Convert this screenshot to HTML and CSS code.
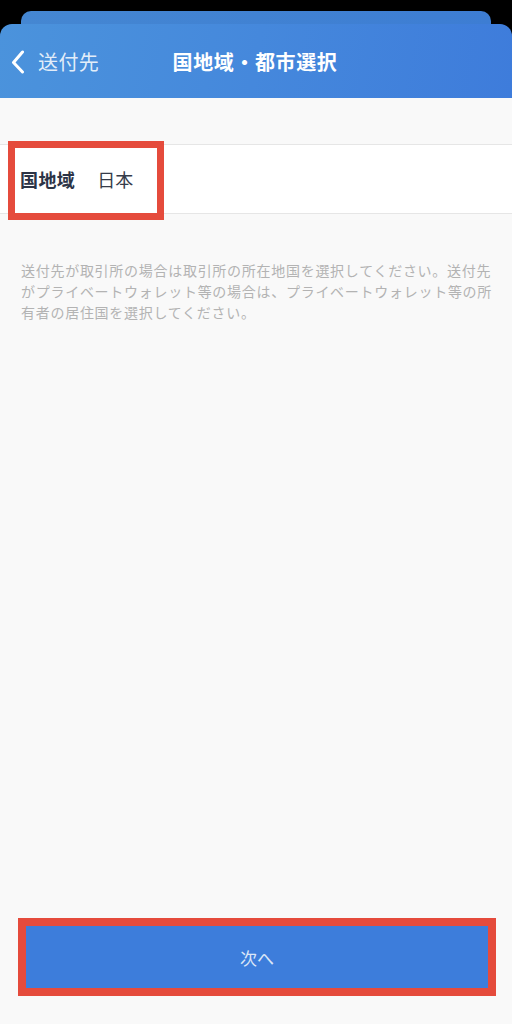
FILE: index.html
```html
<!DOCTYPE html>
<html lang="ja">
<head>
  <meta charset="utf-8">
  <title>国地域・都市選択</title>
  <link rel="stylesheet" href="styles.css">
</head>
<body>
  <div class="screen">
    <div class="top">
      <div class="sheet-back"></div>
      <header class="nav">
        <a class="nav-back" href="#">
          <svg class="chevron" width="14" height="24" viewBox="0 0 14 24">
            <path d="M11.5 2 L2.5 12.5 L11.5 22" fill="none" stroke="#fff" stroke-width="3" stroke-linecap="round" stroke-linejoin="round"/>
          </svg>
          <span>送付先</span>
        </a>
        <h1 class="nav-title">国地域・都市選択</h1>
      </header>
    </div>

    <main class="content">
      <div class="row">
        <span class="row-label">国地域</span>
        <span class="row-value">日本</span>
        <div class="mark mark-row"></div>
      </div>

      <p class="note">送付先が取引所の場合は取引所の所在地国を選択してください。送付先がプライベートウォレット等の場合は、プライベートウォレット等の所有者の居住国を選択してください。</p>

      <div class="footer">
        <button class="button">次へ</button>
      </div>
    </main>
  </div>
</body>
</html>
```

FILE: styles.css
```css
* {
  box-sizing: border-box;
}
body {
  margin: 0;
  background: #000;
  font-family: "Noto Sans CJK JP", "Noto Sans", sans-serif;
}
.screen {
  display: flex;
  flex-direction: column;
  min-height: 100vh;
}
.top {
  background: #000;
  padding-top: 11px;
}
.sheet-back {
  height: 13px;
  margin: 0 21px;
  border-radius: 10px 10px 0 0;
  background: linear-gradient(90deg, #4587d2, #3d7dd3);
}
.nav {
  position: relative;
  height: 74px;
  display: flex;
  align-items: center;
  justify-content: center;
  border-radius: 12px 12px 0 0;
  background: linear-gradient(100deg, #4b93dc 0%, #4588dc 50%, #3e7cdb 100%);
}
.nav-back {
  position: absolute;
  left: 11px;
  top: 0;
  bottom: 0;
  display: flex;
  align-items: center;
  gap: 13px;
  color: rgba(255, 255, 255, 0.86);
  text-decoration: none;
  font-size: 20px;
  letter-spacing: 0.4px;
}
.chevron {
  display: block;
  margin-top: 2px;
}
.nav-title {
  margin: 0 0 0 -2px;
  color: #fff;
  font-size: 20px;
  font-weight: 700;
  letter-spacing: 0.6px;
}
.content {
  flex: 1;
  display: flex;
  flex-direction: column;
  background: #f9f9f9;
}
.row {
  position: relative;
  margin-top: 46px;
  height: 70px;
  display: flex;
  align-items: center;
  padding-left: 20px;
  background: #fff;
  border-top: 1px solid #e6e6e6;
  border-bottom: 1px solid #e6e6e6;
}
.row-label {
  font-size: 18px;
  font-weight: 700;
  color: #2c3446;
  letter-spacing: 0.4px;
}
.row-value {
  margin-left: 22px;
  font-size: 18px;
  color: #363c4a;
}
.mark {
  position: absolute;
  border: 7px solid #e54b3c;
}
.mark-row {
  left: 8px;
  top: -4px;
  width: 156px;
  height: 79px;
}
.note {
  margin: 46px 0 0;
  padding: 0 18px 0 21px;
  font-size: 14px;
  letter-spacing: 0.72px;
  line-height: 21px;
  color: #b3b3b3;
}
.footer {
  margin-top: auto;
  padding: 0 24px 36px 26px;
}
.button {
  display: block;
  width: 100%;
  height: 62px;
  border: none;
  background: #3d7ddb;
  outline: 8px solid #e54b3c;
  color: #dbe6f7;
  font-family: inherit;
  font-size: 17px;
  cursor: pointer;
}
```
